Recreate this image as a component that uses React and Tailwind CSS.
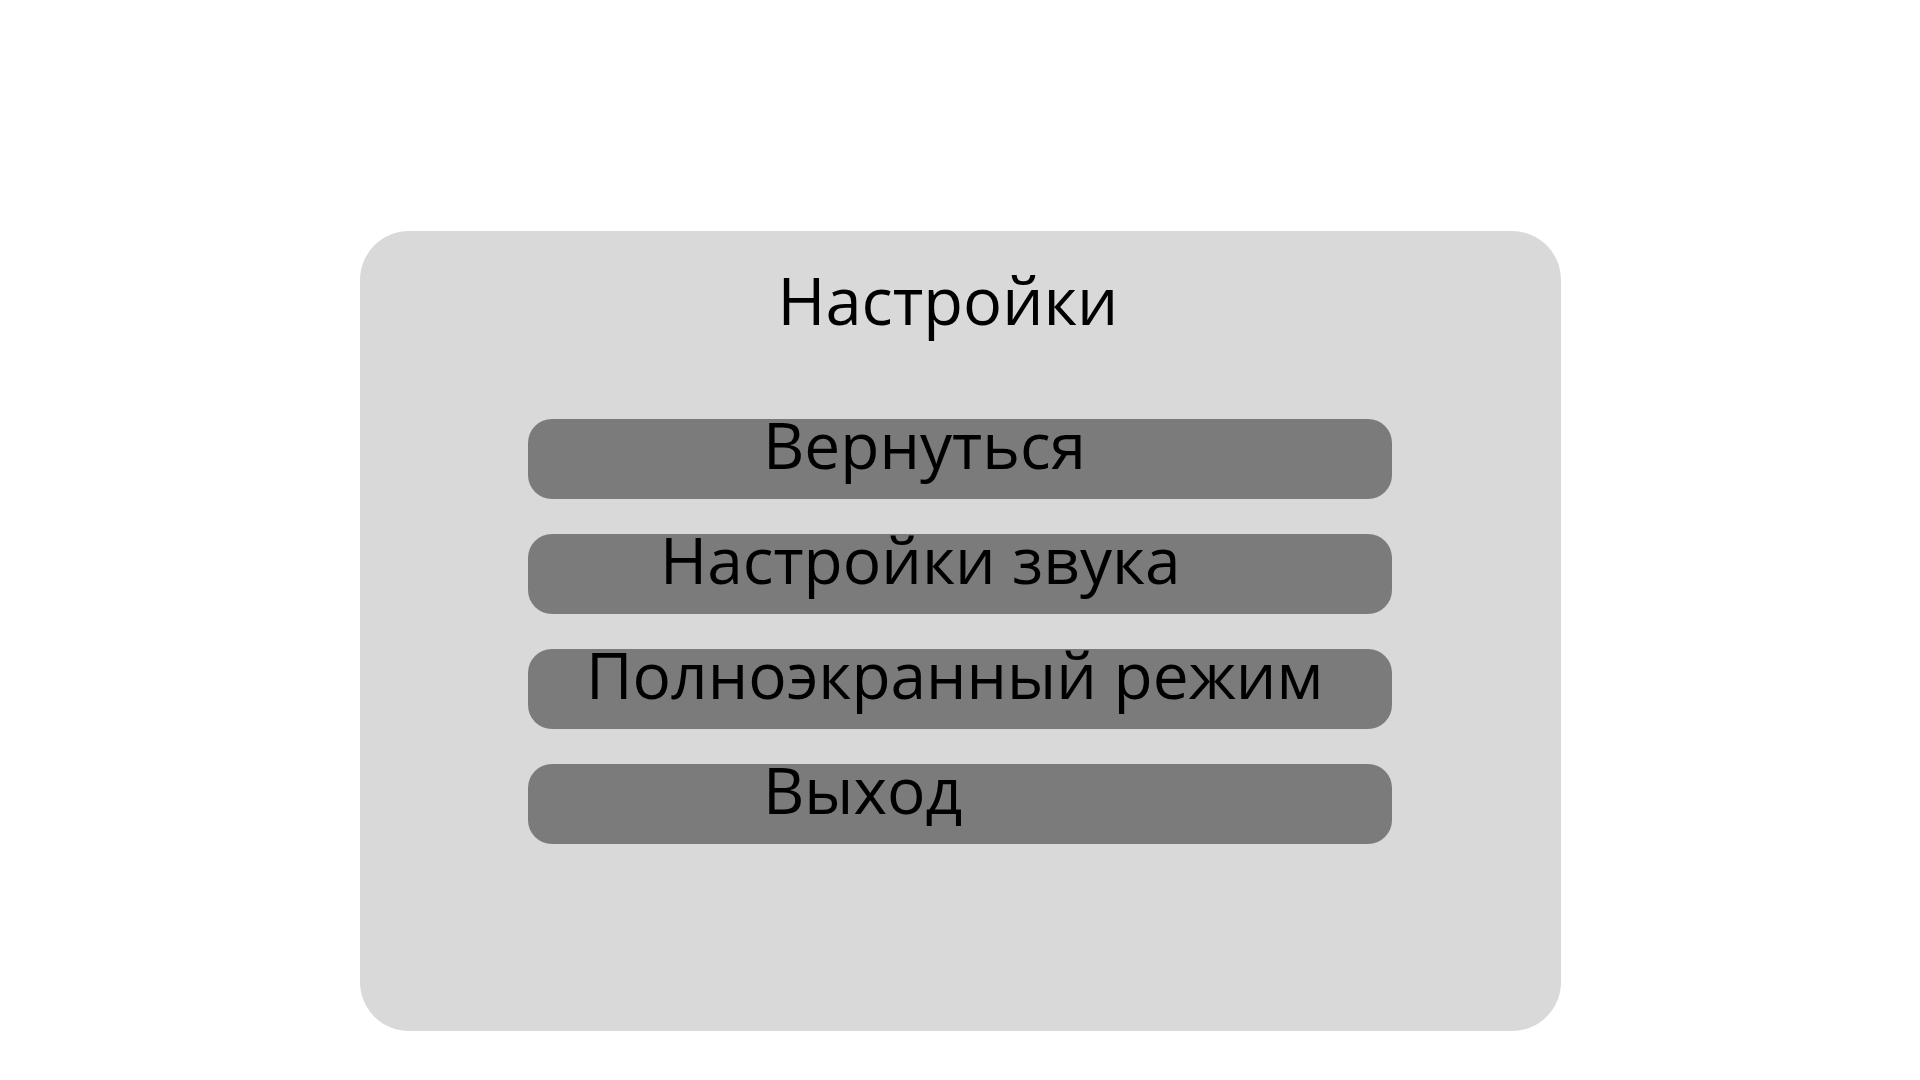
export default function App() {
  const items = [
    { label: 'Вернуться', pad: 'pl-[235px]' },
    { label: 'Настройки звука', pad: 'pl-[132px]' },
    { label: 'Полноэкранный режим', pad: 'pl-[58px]' },
    { label: 'Выход', pad: 'pl-[235px]' },
  ];

  return (
    <div className="min-h-screen bg-white pt-[231px] font-['Open_Sans',sans-serif] text-black">
      <div className="mx-auto flex h-[800px] w-[1201px] flex-col items-center rounded-[49px] bg-[#d9d9d9] pt-[37px]">
        <h1 className="pr-[24px] text-[65px] leading-none font-normal">Настройки</h1>

        <div className="mt-[86px] flex flex-col gap-[35px]">
          {items.map((item) => (
            <button
              key={item.label}
              className={`flex h-[80px] w-[864px] items-start rounded-[24px] bg-[#7b7b7b] text-left ${item.pad}`}
            >
              <span className="text-[64px] leading-[52px] whitespace-nowrap">{item.label}</span>
            </button>
          ))}
        </div>
      </div>
    </div>
  );
}
